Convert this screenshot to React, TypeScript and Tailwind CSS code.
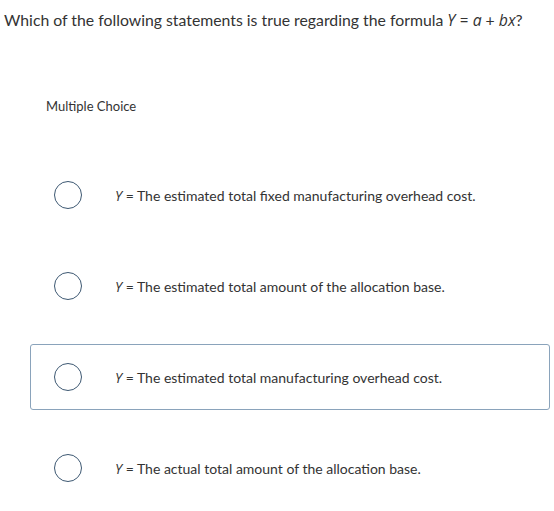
import React from "react";

const options = [
  "The estimated total fixed manufacturing overhead cost.",
  "The estimated total amount of the allocation base.",
  "The estimated total manufacturing overhead cost.",
  "The actual total amount of the allocation base.",
];

const Radio = () => (
  <span className="block h-7 w-7 shrink-0 rounded-full border-[1.5px] border-[#3d5872] bg-white" />
);

export default function App() {
  const hovered = 2;
  return (
    <div className="h-[511px] w-[554px] bg-white text-[#333] [font-family:Lato,'Open_Sans',sans-serif]">
      <p className="pl-1 pt-[10px] text-[15.8px] leading-5">
        Which of the following statements is true regarding the formula{" "}
        <i className="[font-family:'Open_Sans',sans-serif]">Y</i> ={" "}
        <i className="[font-family:'Open_Sans',sans-serif]">a</i> +{" "}
        <i className="[font-family:'Open_Sans',sans-serif]">bx</i>?
      </p>

      <p className="ml-[46px] mt-[66px] text-[13px] leading-5">Multiple Choice</p>

      <div className="mt-[46px] flex flex-col gap-[25px] pl-[30px] pr-1">
        {options.map((text, i) => (
          <div
            key={i}
            className={
              i === hovered
                ? "flex h-[66px] items-center rounded-[3px] border border-[#8aa3bb] pl-[23px]"
                : "flex h-[66px] items-center rounded-[3px] border border-transparent pl-[23px]"
            }
          >
            <Radio />
            <span className="ml-[33px] text-[14px]">
              <i className="[font-family:'Open_Sans',sans-serif]">Y</i> = {text}
            </span>
          </div>
        ))}
      </div>
    </div>
  );
}
